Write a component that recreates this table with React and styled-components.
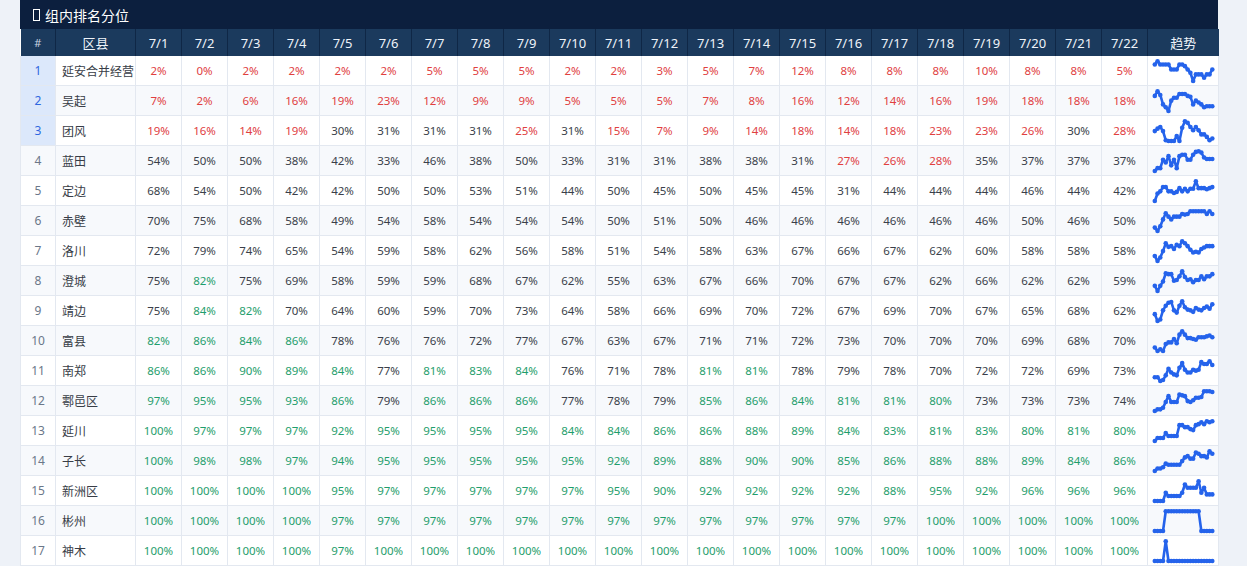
import styled, { createGlobalStyle } from "styled-components";

const GlobalStyle = createGlobalStyle`
  html, body {
    margin: 0;
    padding: 0;
    background: #eef2f8;
    font-family: "Noto Sans", "Noto Sans CJK SC", sans-serif;
  }
`;

const DATES = Array.from({ length: 22 }, (_, i) => `7/${i + 1}`);

const ROWS = [
  ["延安合并经营", [2, 0, 2, 2, 2, 2, 5, 5, 5, 2, 2, 3, 5, 7, 12, 8, 8, 8, 10, 8, 8, 5]],
  ["吴起", [7, 2, 6, 16, 19, 23, 12, 9, 9, 5, 5, 5, 7, 8, 16, 12, 14, 16, 19, 18, 18, 18]],
  ["团风", [19, 16, 14, 19, 30, 31, 31, 31, 25, 31, 15, 7, 9, 14, 18, 14, 18, 23, 23, 26, 30, 28]],
  ["蓝田", [54, 50, 50, 38, 42, 33, 46, 38, 50, 33, 31, 31, 38, 38, 31, 27, 26, 28, 35, 37, 37, 37]],
  ["定边", [68, 54, 50, 42, 42, 50, 50, 53, 51, 44, 50, 45, 50, 45, 45, 31, 44, 44, 44, 46, 44, 42]],
  ["赤壁", [70, 75, 68, 58, 49, 54, 58, 54, 54, 54, 50, 51, 50, 46, 46, 46, 46, 46, 46, 50, 46, 50]],
  ["洛川", [72, 79, 74, 65, 54, 59, 58, 62, 56, 58, 51, 54, 58, 63, 67, 66, 67, 62, 60, 58, 58, 58]],
  ["澄城", [75, 82, 75, 69, 58, 59, 59, 68, 67, 62, 55, 63, 67, 66, 70, 67, 67, 62, 66, 62, 62, 59]],
  ["靖边", [75, 84, 82, 70, 64, 60, 59, 70, 73, 64, 58, 66, 69, 70, 72, 67, 69, 70, 67, 65, 68, 62]],
  ["富县", [82, 86, 84, 86, 78, 76, 76, 72, 77, 67, 63, 67, 71, 71, 72, 73, 70, 70, 70, 69, 68, 70]],
  ["南郑", [86, 86, 90, 89, 84, 77, 81, 83, 84, 76, 71, 78, 81, 81, 78, 79, 78, 70, 72, 72, 69, 73]],
  ["鄠邑区", [97, 95, 95, 93, 86, 79, 86, 86, 86, 77, 78, 79, 85, 86, 84, 81, 81, 80, 73, 73, 73, 74]],
  ["延川", [100, 97, 97, 97, 92, 95, 95, 95, 95, 84, 84, 86, 86, 88, 89, 84, 83, 81, 83, 80, 81, 80]],
  ["子长", [100, 98, 98, 97, 94, 95, 95, 95, 95, 95, 92, 89, 88, 90, 90, 85, 86, 88, 88, 89, 84, 86]],
  ["新洲区", [100, 100, 100, 100, 95, 97, 97, 97, 97, 97, 95, 90, 92, 92, 92, 92, 88, 95, 92, 96, 96, 96]],
  ["彬州", [100, 100, 100, 100, 97, 97, 97, 97, 97, 97, 97, 97, 97, 97, 97, 97, 97, 100, 100, 100, 100, 100]],
  ["神木", [100, 100, 100, 100, 97, 100, 100, 100, 100, 100, 100, 100, 100, 100, 100, 100, 100, 100, 100, 100, 100, 100]],
];

const Page = styled.div`
  padding: 0 29px 0 20px;
`;

const Panel = styled.section`
  width: 1198px;
  background: #fff;
`;

const TitleBar = styled.div`
  height: 29px;
  background: #0c1f3e;
  color: #fff;
  font-size: 14px;
  display: flex;
  align-items: center;
  gap: 5px;
  padding-left: 13px;
`;

const TitleIcon = styled.span`
  width: 5px;
  height: 10px;
  border: 1px solid #fff;
  display: inline-block;
`;

const Table = styled.table`
  border-collapse: collapse;
  table-layout: fixed;
  width: 1198px;
  font-size: 12px;
`;

const HeadCell = styled.th`
  height: 27px;
  padding: 0;
  background: #1b3a5d;
  color: ${(p) => (p.$muted ? "#c9d3e0" : "#eef3f9")};
  font-weight: 400;
  font-size: ${(p) => (p.$muted ? "11px" : "13px")};
  text-align: center;
  border-left: 1px solid #0f2746;
  &:first-child {
    border-left: none;
  }
`;

const Row = styled.tr`
  background: ${(p) => (p.$alt ? "#f7f9fc" : "#ffffff")};
`;

const RankCell = styled.td`
  height: 29px;
  padding: 0;
  text-align: center;
  font-size: 12px;
  color: ${(p) => (p.$top ? "#2f67e0" : "#6b7789")};
  background: ${(p) => (p.$top ? "#dce8fb" : "transparent")};
  border: 1px solid #e3e8f0;
  border-top: none;
`;

const NameCell = styled.td`
  padding: 0 0 0 6px;
  color: #383d47;
  font-size: 12px;
  white-space: nowrap;
  overflow: hidden;
  border: 1px solid #e3e8f0;
  border-top: none;
`;

const ValueCell = styled.td`
  padding: 0;
  text-align: center;
  font-size: 11.5px;
  color: ${(p) => p.$color};
  border: 1px solid #e3e8f0;
  border-top: none;
`;

const TrendCell = styled.td`
  padding: 0;
  border: 1px solid #e3e8f0;
  border-top: none;
  line-height: 0;
`;

const valueColor = (v) => {
  if (v < 30) return "#e0403f";
  if (v >= 80) return "#1f9e6c";
  return "#3a3f4a";
};

const Sparkline = ({ values }) => {
  const min = Math.min(...values);
  const max = Math.max(...values);
  const x0 = 6.8;
  const x1 = 64.3;
  const top = 5.2;
  const bottom = 25;
  const pts = values.map((v, i) => {
    const x = x0 + ((x1 - x0) * i) / (values.length - 1);
    const t = max === min ? 0.5 : (v - min) / (max - min);
    // 数值越小画得越高
    const y = top + (bottom - top) * t;
    return [x, y];
  });
  return (
    <svg width="71" height="29" viewBox="0 0 71 29">
      <polyline
        points={pts.map((p) => p.join(",")).join(" ")}
        fill="none"
        stroke="#2563eb"
        strokeWidth="2.6"
        strokeLinejoin="round"
      />
      {pts.map(([x, y], i) => (
        <circle key={i} cx={x} cy={y} r="2.3" fill="#2563eb" />
      ))}
    </svg>
  );
};

export default function App() {
  return (
    <Page>
      <GlobalStyle />
      <Panel>
        <TitleBar>
          <TitleIcon />
          组内排名分位
        </TitleBar>
        <Table>
          <colgroup>
            <col style={{ width: 35 }} />
            <col style={{ width: 80 }} />
            {DATES.map((d) => (
              <col key={d} style={{ width: 46 }} />
            ))}
            <col style={{ width: 71 }} />
          </colgroup>
          <thead>
            <tr>
              <HeadCell $muted>#</HeadCell>
              <HeadCell>区县</HeadCell>
              {DATES.map((d) => (
                <HeadCell key={d}>{d}</HeadCell>
              ))}
              <HeadCell>趋势</HeadCell>
            </tr>
          </thead>
          <tbody>
            {ROWS.map(([name, values], i) => (
              <Row key={name} $alt={i % 2 === 1}>
                <RankCell $top={i < 3}>{i + 1}</RankCell>
                <NameCell>{name}</NameCell>
                {values.map((v, j) => (
                  <ValueCell key={j} $color={valueColor(v)}>
                    {v}%
                  </ValueCell>
                ))}
                <TrendCell>
                  <Sparkline values={values} />
                </TrendCell>
              </Row>
            ))}
          </tbody>
        </Table>
      </Panel>
    </Page>
  );
}
